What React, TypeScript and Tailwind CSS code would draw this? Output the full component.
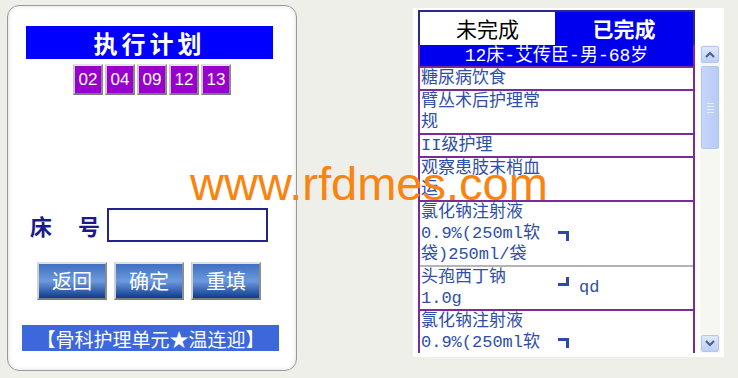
import React from 'react';

const cjk = { fontFamily: '"Noto Sans CJK SC", "Liberation Sans", sans-serif' };
const rowFont = { fontFamily: '"Liberation Mono", "Noto Sans CJK SC", monospace' };

const NumBox = ({ n }: { n: string }) => (
  <div className="w-[30px] h-[31px] border-2 border-t-[#e4e4e4] border-l-[#c8c8c8] border-r-[#8a8a8a] border-b-[#7a7a7a] bg-[#9a00cc] flex items-center justify-center">
    <span className="text-white text-[17px] leading-none" style={{ fontFamily: '"Liberation Sans", sans-serif' }}>{n}</span>
  </div>
);

const BlueButton = ({ label }: { label: string }) => (
  <div className="w-[70px] h-[38px] border-2 border-t-[#e0e0e0] border-l-[#d0d0d0] border-r-[#8c8c8c] border-b-[#7c7c7c] bg-gradient-to-b from-[#3f6fbf] via-[#6d9ade] to-[#0d3a8c] flex items-center justify-center">
    <span className="text-white text-[20px] leading-none" style={cjk}>{label}</span>
  </div>
);

const CornerDown = () => (
  <div className="w-[11px] h-[10px] border-t-[3px] border-r-[3px] border-[#2a4aa6]" />
);
const CornerUp = () => (
  <div className="w-[11px] h-[9px] border-b-[3px] border-r-[3px] border-[#2a4aa6]" />
);

type Row = {
  lines: string[];
  mark?: 'down' | 'up';
  markTop?: number;
  freq?: string;
  grey?: boolean;
};

const rows: Row[] = [
  { lines: ['糖尿病饮食'] },
  { lines: ['臂丛术后护理常', '规'] },
  { lines: ['II级护理'] },
  { lines: ['观察患肢末梢血', '运'] },
  { lines: ['氯化钠注射液', '0.9%(250ml软', '袋)250ml/袋'], mark: 'down', markTop: 29, grey: true },
  { lines: ['头孢西丁钠', '1.0g'], mark: 'up', markTop: 10, freq: 'qd' },
  { lines: ['氯化钠注射液', '0.9%(250ml软', '袋)250ml/袋'], mark: 'down', markTop: 27 },
];

const Chevron = ({ up }: { up?: boolean }) => (
  <svg width="10" height="7" viewBox="0 0 10 7">
    <path d={up ? 'M1 6 L5 2 L9 6' : 'M1 1 L5 5 L9 1'} fill="none" stroke="#4d6185" strokeWidth="2.2" />
  </svg>
);

export default function App() {
  return (
    <div className="relative w-[738px] h-[378px] bg-[#efefe9] flex items-start overflow-hidden">
      {/* left panel */}
      <div className="ml-[7px] mt-[5px] w-[290px] h-[366px] rounded-[12px] border border-[#9a9a9a] bg-white shadow-[inset_0_0_4px_rgba(0,0,0,0.15)] flex flex-col">
        <div className="ml-[18px] mt-[20px] w-[247px] h-[33px] bg-[#0000ff] flex items-center justify-center">
          <span className="text-white text-[24px] font-bold tracking-[4px] leading-none" style={cjk}>执行计划</span>
        </div>
        <div className="mt-[5px] flex justify-center gap-[2px]">
          {['02', '04', '09', '12', '13'].map((n) => (
            <NumBox key={n} n={n} />
          ))}
        </div>
        <div className="mt-[113px] flex items-center">
          <span className="ml-[22px] w-[70px] flex justify-between text-[22px] font-bold text-[#1a1a8c] leading-none" style={cjk}>
            <span>床</span>
            <span>号</span>
          </span>
          <div className="ml-[7px] w-[161px] h-[34px] border-2 border-[#24248a] bg-white" />
        </div>
        <div className="mt-[20px] ml-[29px] flex gap-[7px]">
          <BlueButton label="返回" />
          <BlueButton label="确定" />
          <BlueButton label="重填" />
        </div>
        <div className="mt-[25px] ml-[14px] w-[257px] h-[26px] bg-[#3d68dc] flex items-center justify-center">
          <span className="text-white text-[19px] leading-none whitespace-nowrap" style={cjk}>【骨科护理单元★温连迎】</span>
        </div>
      </div>

      {/* right panel */}
      <div className="ml-[116px] mt-[8px] w-[311px] h-[349px] bg-white flex flex-col">
        <div className="ml-[5px] mt-[2px] w-[277px] h-[35px] flex border-2 border-b-0 border-[#2a2a8a]">
          <div className="w-[135px] bg-white flex items-center justify-center">
            <span className="text-black text-[21px] leading-none" style={cjk}>未完成</span>
          </div>
          <div className="flex-1 bg-[#0000ee] flex items-center justify-center">
            <span className="text-white text-[21px] font-bold leading-none" style={cjk}>已完成</span>
          </div>
        </div>
        <div className="flex">
          <div className="ml-[5px] w-[277px] h-[308px] overflow-hidden border-x-2 border-[#7b2a9a]">
            <div className="h-[23px] bg-[#0000ee] flex items-center justify-center border-b-2 border-[#7b2a9a]">
              <span className="text-white text-[18px] leading-none whitespace-nowrap" style={rowFont}>12床-艾传臣-男-68岁</span>
            </div>
            {rows.map((r, i) => (
              <div
                key={i}
                className={`grid grid-cols-[136px_20px_1fr] border-b-2 ${r.grey ? 'border-[#b4b4b4]' : 'border-[#7b2a9a]'}`}
              >
                <div className="pl-[1px] text-[#2f4ea6] text-[17px] leading-[21px]" style={rowFont}>
                  {r.lines.map((l, j) => (
                    <div key={j} className="whitespace-nowrap">{l}</div>
                  ))}
                </div>
                <div className="relative">
                  {r.mark && (
                    <div className="absolute left-[2px]" style={{ top: r.markTop }}>
                      {r.mark === 'down' ? <CornerDown /> : <CornerUp />}
                    </div>
                  )}
                </div>
                <div className="flex items-center pl-[3px] text-[#2f4ea6] text-[17px]" style={rowFont}>
                  {r.freq}
                </div>
              </div>
            ))}
          </div>
          {/* scrollbar */}
          <div className="ml-[5px] w-[20px] h-[308px] bg-[#f6f6f2] flex flex-col items-center">
            <div className="w-[18px] h-[17px] mt-[1px] rounded-[2px] border border-[#b5c6ec] bg-gradient-to-b from-[#dfe8fd] to-[#bccff8] flex items-center justify-center">
              <Chevron up />
            </div>
            <div className="w-[18px] h-[83px] mt-[3px] rounded-[2px] border border-[#b5c6ec] bg-gradient-to-r from-[#c6d6fb] to-[#b7cbf6] flex flex-col items-center justify-center gap-[2px]">
              <div className="w-[7px] h-[1px] bg-[#e8eefc]" />
              <div className="w-[7px] h-[1px] bg-[#e8eefc]" />
              <div className="w-[7px] h-[1px] bg-[#e8eefc]" />
              <div className="w-[7px] h-[1px] bg-[#e8eefc]" />
            </div>
            <div className="flex-1" />
            <div className="w-[18px] h-[17px] mb-[1px] rounded-[2px] border border-[#b5c6ec] bg-gradient-to-b from-[#dfe8fd] to-[#bccff8] flex items-center justify-center">
              <Chevron />
            </div>
          </div>
        </div>
      </div>

      {/* watermark */}
      <div
        className="absolute left-[190px] top-[160px] text-[47px] leading-none text-[#fa8410] whitespace-nowrap pointer-events-none"
        style={{ fontFamily: '"Liberation Sans", Arial, sans-serif' }}
      >
        www.rfdmes.com
      </div>
    </div>
  );
}
